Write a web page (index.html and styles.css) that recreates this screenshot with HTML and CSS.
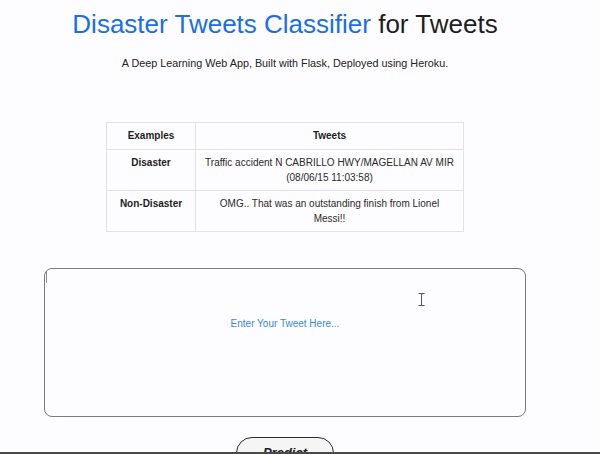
FILE: index.html
```html
<!DOCTYPE html>
<html lang="en">
<head>
<meta charset="utf-8">
<title>Disaster Tweets Classifier</title>
<link rel="stylesheet" href="styles.css">
</head>
<body>
<div class="page">
  <h1 class="title"><span class="accent">Disaster Tweets Classifier</span> for Tweets</h1>
  <p class="subtitle">A Deep Learning Web App, Built with Flask, Deployed using Heroku.</p>

  <table class="examples">
    <thead>
      <tr><th class="col-a head">Examples</th><th class="head">Tweets</th></tr>
    </thead>
    <tbody>
      <tr><th>Disaster</th><td>Traffic accident N CABRILLO HWY/MAGELLAN AV MIR (08/06/15 11:03:58)</td></tr>
      <tr><th>Non-Disaster</th><td>OMG.. That was an outstanding finish from Lionel Messi!!</td></tr>
    </tbody>
  </table>

  <form class="form">
    <div class="input-wrap">
      <textarea class="tweet" placeholder="Enter Your Tweet Here..."></textarea>
      <span class="caret"></span>
      <svg class="ibeam" width="7" height="13" viewBox="0 0 7 13"><path d="M0.5 0.5h6M3.5 0.5v12M0.5 12.5h6" stroke="#555" stroke-width="1" fill="none"/></svg>
    </div>
    <button type="button" class="predict">Predict</button>
  </form>
</div>
<div class="frame-edge"></div>
</body>
</html>
```

FILE: styles.css
```css
html, body {
  margin: 0;
  padding: 0;
  background: #fdfcfe;
  overflow: hidden;
}
body {
  font-family: "Liberation Sans", Arial, sans-serif;
  color: #222;
}
.page {
  width: 570px;
  display: flex;
  flex-direction: column;
  align-items: center;
}
.title {
  margin: 9px 0 0;
  font-size: 26px;
  font-weight: normal;
  line-height: 30px;
  color: #1e1e1e;
}
.accent {
  color: #1a6fe6;
}
.subtitle {
  margin: 16px 0 0;
  font-size: 10.8px;
  line-height: 16px;
  color: #222;
}
.examples {
  margin-top: 51px;
  border-collapse: collapse;
  width: 358px;
  font-size: 10px;
  line-height: 15px;
  color: #2a2a2a;
}
.examples th, .examples td {
  border: 1px solid #e2e2e6;
  padding: 5px 8px 5px;
  text-align: center;
  vertical-align: top;
}
.examples .head {
  padding: 5px 8px 6px;
}
.examples th {
  color: #1e1e1e;
  font-weight: bold;
}
.examples .col-a {
  width: 72px;
}
.form {
  margin-top: 36px;
  display: flex;
  flex-direction: column;
  align-items: center;
}
.input-wrap {
  position: relative;
  width: 482px;
  height: 149px;
}
.tweet {
  box-sizing: border-box;
  width: 482px;
  height: 149px;
  border: 1px solid #7a7a80;
  border-radius: 8px;
  background: #fdfcfe;
  padding: 49px 10px 10px;
  resize: none;
  text-align: center;
  font-family: "Liberation Sans", Arial, sans-serif;
  font-size: 10px;
  outline: none;
}
.tweet::placeholder {
  color: #3a8bd3;
  opacity: 1;
}
.caret {
  position: absolute;
  left: 2px;
  top: 3px;
  width: 1px;
  height: 12px;
  background: #888;
}
.ibeam {
  position: absolute;
  left: 374px;
  top: 25px;
}
.predict {
  margin-top: 20px;
  width: 98px;
  height: 32px;
  border: 1.5px solid #2a2a2a;
  border-radius: 16px;
  background: #f5f5f6;
  font-family: "Liberation Sans", Arial, sans-serif;
  font-size: 13px;
  font-weight: bold;
  font-style: italic;
  color: #222;
  padding: 0;
  line-height: 26px;
  align-self: center;
}
.frame-edge {
  position: fixed;
  left: 0;
  right: 0;
  bottom: 0;
  height: 2px;
  background: #4a4a4a;
}
```
